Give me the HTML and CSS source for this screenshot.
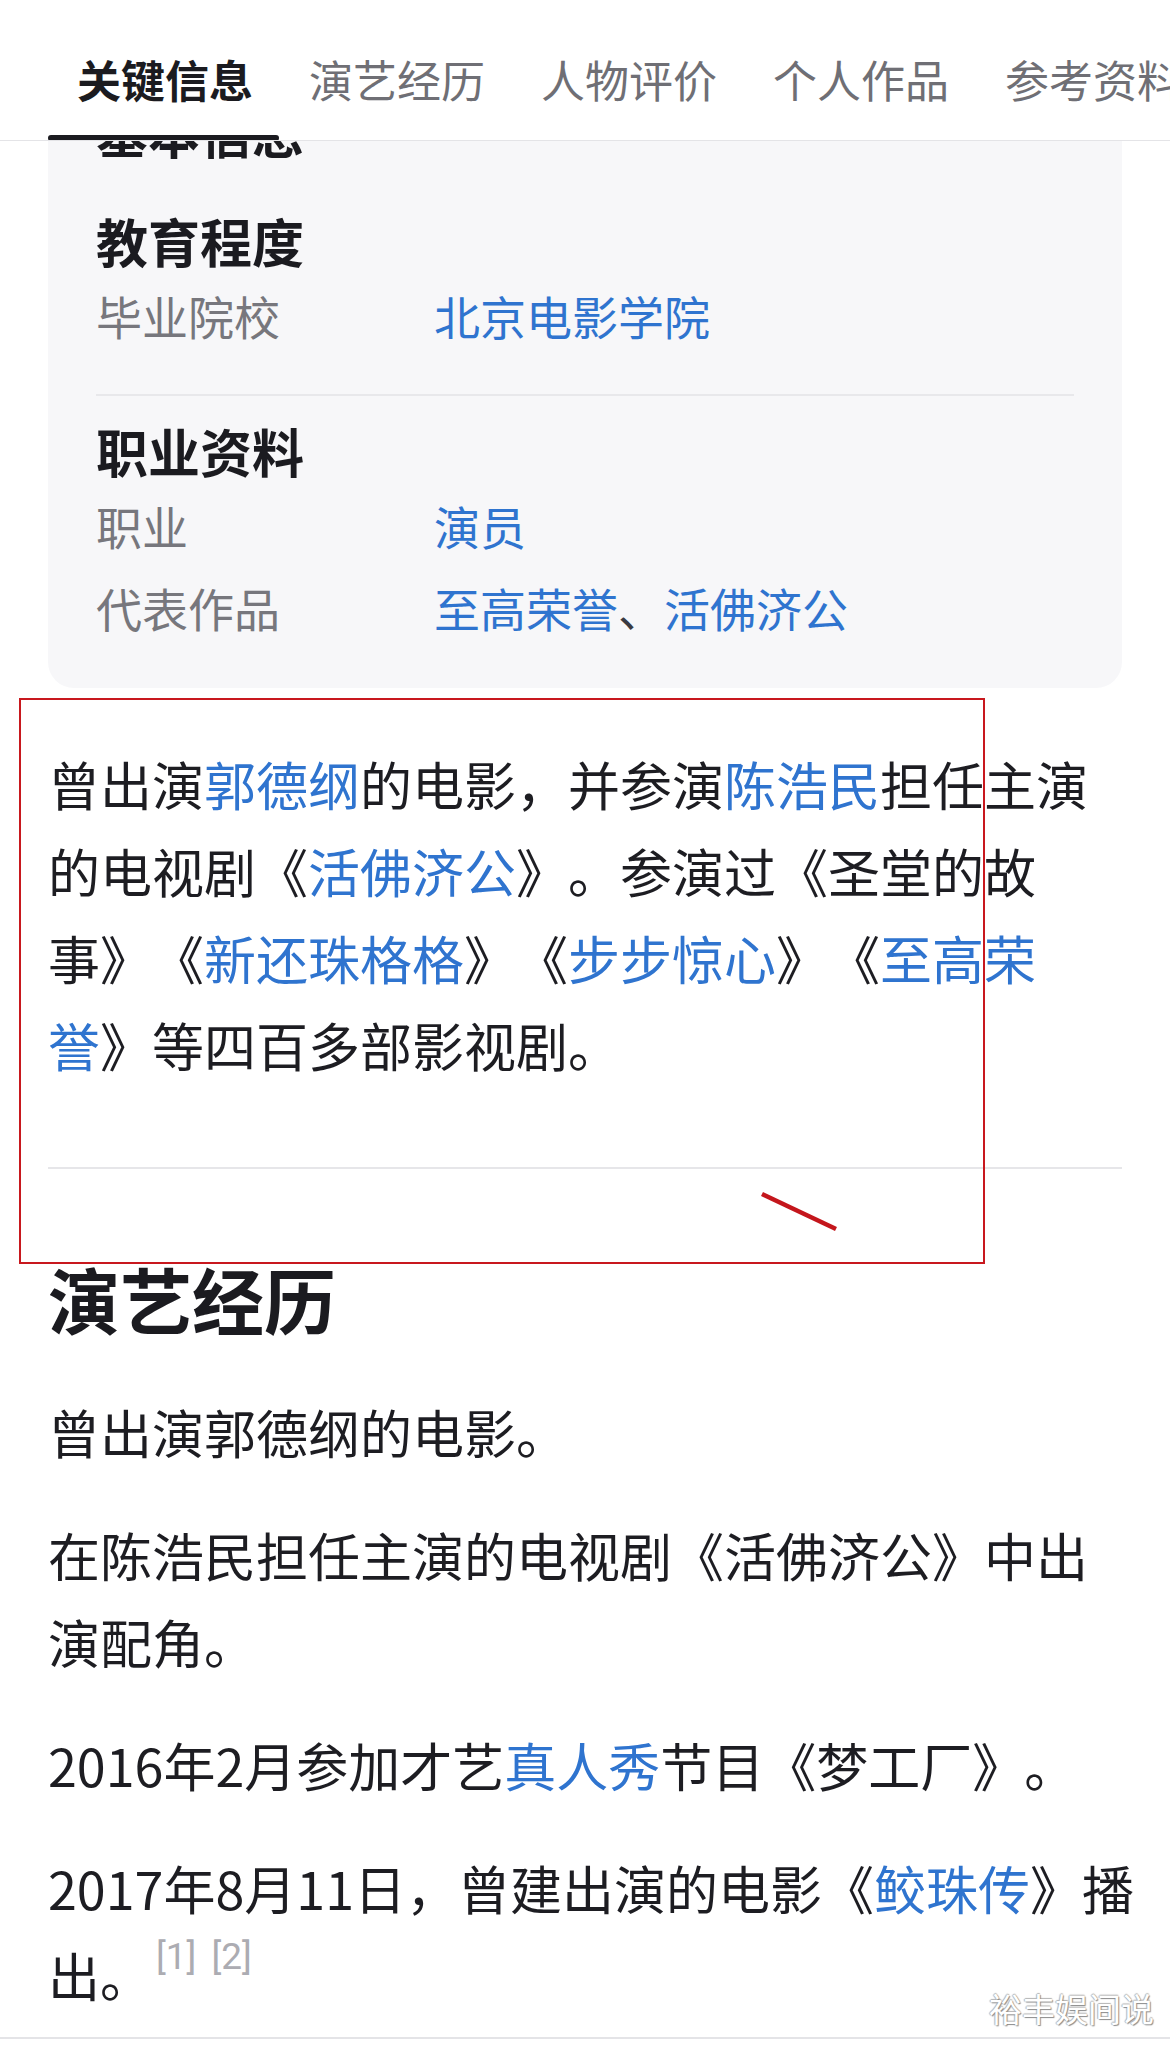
FILE: index.html
```html
<!DOCTYPE html>
<html lang="zh-CN">
<head>
<meta charset="utf-8">
<title>曾建</title>
<link rel="stylesheet" href="styles.css">
</head>
<body>
<div class="page">
  <nav class="tabs">
    <div class="tab active">关键信息</div>
    <div class="tab">演艺经历</div>
    <div class="tab">人物评价</div>
    <div class="tab">个人作品</div>
    <div class="tab">参考资料</div>
  </nav>

  <main class="main">
    <section class="card">
      <h3 class="group-title">基本信息</h3>
      <div class="group first">
        <h4 class="group-title">教育程度</h4>
        <div class="row"><span class="label">毕业院校</span><span class="value"><a class="link">北京电影学院</a></span></div>
      </div>
      <div class="card-divider"></div>
      <div class="group second">
        <h4 class="group-title">职业资料</h4>
        <div class="row"><span class="label">职业</span><span class="value"><a class="link">演员</a></span></div>
        <div class="row"><span class="label">代表作品</span><span class="value"><a class="link">至高荣誉</a><span class="sep">、</span><a class="link">活佛济公</a></span></div>
      </div>
    </section>

    <p class="text intro">曾出演<a class="link">郭德纲</a>的电影，并参演<a class="link">陈浩民</a>担任主演的电视剧《<a class="link">活佛济公</a>》。参演过《圣堂的故事》《<a class="link">新还珠格格</a>》《<a class="link">步步惊心</a>》《<a class="link">至高荣誉</a>》等四百多部影视剧。</p>

    <div class="divider"></div>

    <h2 class="section-title">演艺经历</h2>
    <p class="text first-para">曾出演郭德纲的电影。</p>
    <p class="text">在陈浩民担任主演的电视剧《活佛济公》中出演配角。</p>
    <p class="text">2016年2月参加才艺<a class="link">真人秀</a>节目《梦工厂》。</p>
    <p class="text">2017年8月11日，曾建出演的电影《<a class="link">鲛珠传</a>》播出。<sup class="ref first-ref">[1]</sup><sup class="ref">[2]</sup></p>
  </main>
  <div class="bottom-line"></div>

  <div class="mark-box"></div>
  <svg class="mark-slash" width="1170" height="2047" viewBox="0 0 1170 2047">
    <line x1="762" y1="1194" x2="836" y2="1229" stroke="#c4161c" stroke-width="4.5"/>
  </svg>
  <div class="watermark">裕丰娱间说</div>
</div>
</body>
</html>
```

FILE: styles.css
```css
html, body {
  margin: 0;
  padding: 0;
  background: #ffffff;
}

.page {
  position: relative;
  width: 1170px;
  height: 2047px;
  overflow: hidden;
  font-family: "Noto Sans CJK SC", "Noto Sans", sans-serif;
  color: #1d1d22;
  text-spacing-trim: space-all;
}

/* Tabs header */
.tabs {
  position: relative;
  z-index: 2;
  display: flex;
  height: 140px;
  padding-left: 49px;
  background: #ffffff;
  border-bottom: 1px solid #e4e4e7;
  white-space: nowrap;
  overflow: hidden;
}

.tab {
  position: relative;
  flex: none;
  padding: 49px 28px 0;
  font-size: 44px;
  line-height: 60px;
  color: #6f6f75;
}

.tab.active {
  color: #1b1b20;
  font-weight: 700;
}

.tab.active::after {
  content: "";
  position: absolute;
  left: -1px;
  right: 2px;
  bottom: -1px;
  height: 6px;
  border-radius: 3px;
  background: #1b1b20;
}

/* Main content */
.main {
  margin-top: -74px;
  padding: 0 48px;
}

.card {
  background: #f7f7f9;
  border-radius: 26px;
  padding: 32px 48px 40px;
}

.group-title {
  margin: 0;
  font-size: 52px;
  line-height: 66px;
  font-weight: 700;
  color: #1b1b20;
}

.group.first {
  margin-top: 43px;
}

.group.second {
  margin-top: 22px;
}

.row {
  display: grid;
  grid-template-columns: 338px 1fr;
  font-size: 46px;
  line-height: 82px;
}

.label {
  color: #77777d;
}

.value {
  color: #2f74cf;
}

.sep {
  color: #3a3a40;
}

.link {
  color: #2f74cf;
  text-decoration: none;
}

.card-divider {
  height: 2px;
  margin-top: 38px;
  background: #e8e8eb;
}

.text {
  margin: 36px -14px 0 0;
  font-size: 52px;
  line-height: 87px;
}

.text.intro {
  margin-top: 52px;
}

.divider {
  height: 2px;
  margin-top: 79px;
  background: #e6e6e9;
}

.section-title {
  margin: 79px 0 0;
  font-size: 72px;
  line-height: 100px;
  font-weight: 700;
  color: #1b1b20;
}

.text.first-para {
  margin-top: 40px;
}

.ref {
  font-family: Roboto, "Liberation Sans", sans-serif;
  font-size: 37px;
  line-height: 0;
  vertical-align: 28px;
  color: #acacb2;
  margin-left: 15px;
}

.ref.first-ref {
  margin-left: 4px;
}

.bottom-line {
  height: 2px;
  margin-top: 19px;
  background: #e4e4e7;
}

/* Annotation overlays */
.mark-box {
  position: absolute;
  left: 19px;
  top: 698px;
  width: 966px;
  height: 566px;
  box-sizing: border-box;
  border: 2px solid #c8181e;
  pointer-events: none;
}

.mark-slash {
  position: absolute;
  left: 0;
  top: 0;
  pointer-events: none;
}

.watermark {
  position: absolute;
  right: 16px;
  top: 1986px;
  font-size: 33px;
  line-height: 44px;
  color: #ffffff;
  text-shadow: 1px 1px 1px #8a8a8a, -1px 0 1px #b5b5b5, 0 -1px 1px #b5b5b5;
}
```
